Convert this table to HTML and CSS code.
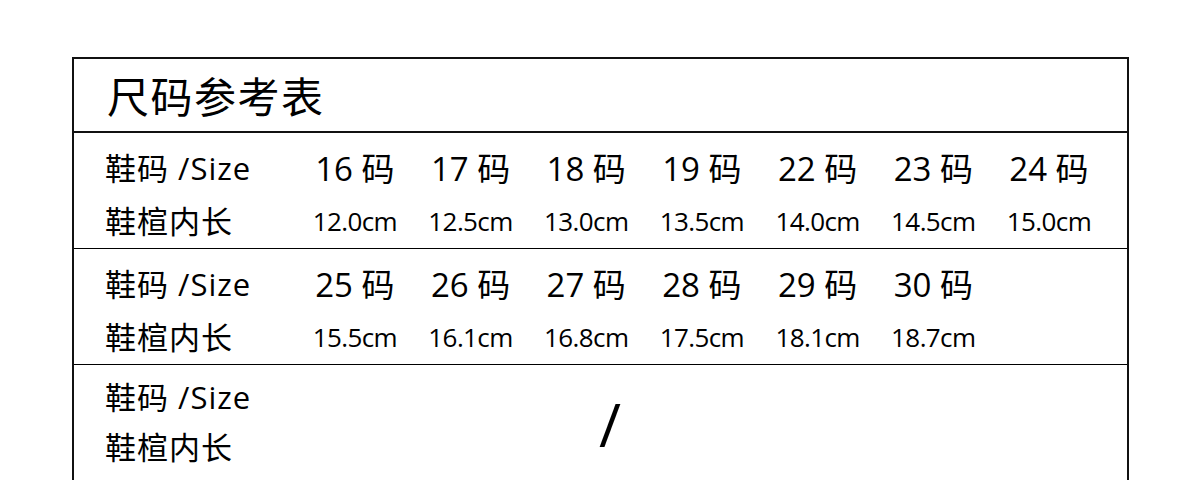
FILE: index.html
```html
<!DOCTYPE html>
<html lang="zh">
<head>
<meta charset="utf-8">
<title>尺码参考表</title>
<link rel="stylesheet" href="styles.css">
</head>
<body>
<div class="chart">
  <div class="title">尺码参考表</div>
  <div class="row">
    <div class="label">鞋码 /Size</div>
    <div class="size">16 码</div>
    <div class="size">17 码</div>
    <div class="size">18 码</div>
    <div class="size">19 码</div>
    <div class="size">22 码</div>
    <div class="size">23 码</div>
    <div class="size">24 码</div>
    <div class="label">鞋楦内长</div>
    <div class="len">12.0cm</div>
    <div class="len">12.5cm</div>
    <div class="len">13.0cm</div>
    <div class="len">13.5cm</div>
    <div class="len">14.0cm</div>
    <div class="len">14.5cm</div>
    <div class="len">15.0cm</div>
  </div>
  <div class="row">
    <div class="label">鞋码 /Size</div>
    <div class="size">25 码</div>
    <div class="size">26 码</div>
    <div class="size">27 码</div>
    <div class="size">28 码</div>
    <div class="size">29 码</div>
    <div class="size">30 码</div>
    <div class="size"></div>
    <div class="label">鞋楦内长</div>
    <div class="len">15.5cm</div>
    <div class="len">16.1cm</div>
    <div class="len">16.8cm</div>
    <div class="len">17.5cm</div>
    <div class="len">18.1cm</div>
    <div class="len">18.7cm</div>
    <div class="len"></div>
  </div>
  <div class="row last">
    <div class="label">鞋码 /Size</div>
    <div class="empty">/</div>
    <div class="label">鞋楦内长</div>
  </div>
</div>
</body>
</html>
```

FILE: styles.css
```css
* { box-sizing: border-box; }
html, body { margin: 0; padding: 0; background: #fff; }
body {
  width: 1200px;
  height: 480px;
  overflow: hidden;
  font-family: "Open Sans", "Noto Sans CJK SC", sans-serif;
  font-weight: 400;
  color: #000;
}
.chart {
  margin: 57px 0 0 72px;
  width: 1057px;
  height: 423px;
  border: 2px solid #111;
  border-bottom: none;
}
.title {
  height: 74px;
  border-bottom: 2px solid #111;
  padding-left: 33px;
  font-family: "Noto Sans CJK SC", sans-serif;
  font-size: 42px;
  letter-spacing: 1.5px;
  line-height: 72px;
}
.row {
  display: grid;
  grid-template-columns: 223px repeat(7, 115.7px);
  grid-template-rows: 53px 53px;
  padding-top: 9px;
  height: 116px;
  border-bottom: 1px solid #000;
}
.row.last {
  grid-template-rows: 50px 50px;
  padding-top: 7px;
  height: auto;
  border-bottom: none;
}
.label {
  padding-left: 31px;
  font-size: 31px;
  letter-spacing: 1px;
  line-height: 53px;
  white-space: nowrap;
}
.row.last .label { line-height: 50px; }
.size {
  text-align: center;
  font-size: 33px;
  line-height: 53px;
  white-space: nowrap;
}
.len {
  text-align: center;
  font-size: 26px;
  letter-spacing: -0.6px;
  line-height: 53px;
  white-space: nowrap;
}
.empty {
  grid-column: 2 / -1;
  grid-row: 1 / 3;
  align-self: center;
  padding-left: 302px;
  font-size: 60px;
  line-height: 60px;
  margin-top: 4px;
}
```
